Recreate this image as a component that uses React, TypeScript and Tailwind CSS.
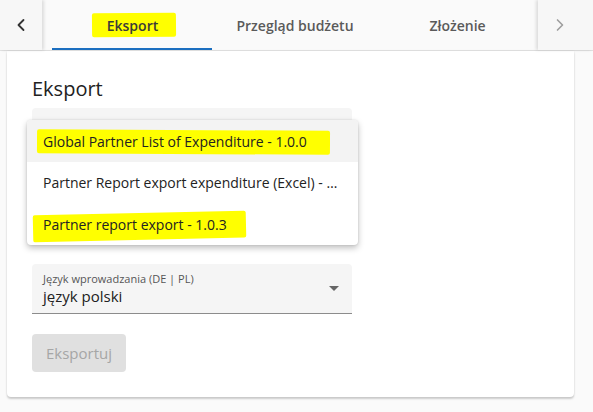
import { ChevronLeft, ChevronRight } from "lucide-react";

type MarkProps = { children: React.ReactNode; mark: string };

// Yellow marker stroke laid under a piece of text
const Marked = ({ children, mark }: MarkProps) => (
  <span className="relative inline-block">
    <span className={`absolute bg-[#ffff00] ${mark}`} />
    <span className="relative">{children}</span>
  </span>
);

const tabs = ["Eksport", "Przegląd budżetu", "Złożenie"];

export default function App() {
  return (
    <div className="min-h-screen bg-[#fafafa] font-['Open_Sans',sans-serif] text-[#212121]">
      <div className="flex h-[51px] border-b border-[#e2e2e2]">
        <button className="relative z-10 flex w-[43px] items-center justify-center bg-[#f7f7f7] shadow-[2px_0_3px_rgba(0,0,0,0.12)]">
          <ChevronLeft className="h-[20px] w-[20px] text-[#333]" strokeWidth={2.2} />
        </button>
        <div className="flex flex-1 pl-[10px]">
          {tabs.map((t, i) => (
            <div
              key={t}
              className={`flex h-full min-w-[160px] items-center justify-center whitespace-nowrap px-6 text-[14px] font-semibold ${
                i === 0 ? "border-b-2 border-[#1c6fc0] pt-[2px] text-[#3a3a3a]" : "text-[#5a5a5a]"
              }`}
            >
              {i === 0 ? (
                <Marked mark="-left-[15px] -right-[17px] -top-[2px] -bottom-[1px] -rotate-[0.5deg] rounded-[2px]">{t}</Marked>
              ) : (
                t
              )}
            </div>
          ))}
        </div>
        <button className="relative z-10 flex w-[56px] items-center justify-start bg-[#f7f7f7] pl-[12px] shadow-[-2px_0_3px_rgba(0,0,0,0.12)]">
          <ChevronRight className="h-[20px] w-[20px] text-[#9e9e9e]" strokeWidth={2} />
        </button>
      </div>

      <div className="relative ml-[7px] w-[567px] rounded-b-[4px] bg-white px-[25px] pt-[24px] pb-[25px] shadow-[0_2px_2px_rgba(0,0,0,0.18),0_0_2px_rgba(0,0,0,0.08)]">
        <h2 className="text-[20px] leading-[28px] font-normal text-[#222]">Eksport</h2>

        <div className="mt-[5px] h-[50px] w-[320px] rounded-t-[4px] bg-[#f5f5f5]" />

        <div className="mt-[106px] flex h-[50px] w-[320px] items-center rounded-t-[4px] border-b border-[#8c8c8c] bg-[#f5f5f5] px-[11px]">
          <div className="flex-1">
            <div className="text-[11px] leading-[14px] text-[#555]">Język wprowadzania (DE | PL)</div>
            <div className="text-[15px] leading-[20px] text-[#212121]">język polski</div>
          </div>
          <span className="mr-[2px] h-0 w-0 border-x-[5px] border-t-[5px] border-x-transparent border-t-[#666]" />
        </div>

        <button className="mt-[20px] h-[38px] w-[94px] rounded-[4px] bg-[#e0e0e0] text-[15px] text-[#a6a6a6]">Eksportuj</button>

        <div className="absolute left-[20px] top-[69px] w-[331px] overflow-hidden rounded-[4px] bg-white text-[14px] text-[#222] shadow-[0_3px_6px_rgba(0,0,0,0.25),0_0_2px_rgba(0,0,0,0.12)]">
          <div className="flex h-[42px] items-center bg-[#f3f3f3] px-[16px]">
            <Marked mark="-left-[6px] -right-[23px] top-[-1px] bottom-[-2px] rotate-[0.3deg] rounded-[2px]">
              Global Partner List of Expenditure - 1.0.0
            </Marked>
          </div>
          <div className="flex h-[41px] items-center px-[16px]">
            <span className="truncate">Partner Report export expenditure (Excel) - 1.0.1</span>
          </div>
          <div className="flex h-[42px] items-center px-[16px]">
            <Marked mark="-left-[10px] -right-[19px] top-[-1px] bottom-[-5px] -rotate-[1.3deg] rounded-[2px]">
              Partner report export - 1.0.3
            </Marked>
          </div>
        </div>
      </div>
    </div>
  );
}
